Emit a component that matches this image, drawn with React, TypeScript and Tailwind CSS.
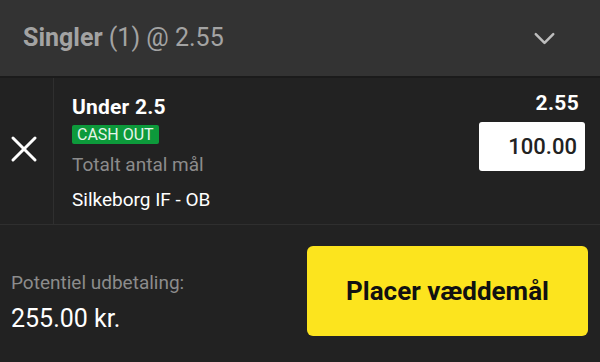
import { ChevronDown, X } from 'lucide-react';

export default function App() {
  return (
    <div className="w-[600px] h-[362px] bg-[#222222] font-['Roboto','Liberation_Sans',sans-serif] overflow-hidden">
      {/* header */}
      <div className="h-[78px] bg-[#333333] flex items-center justify-between pl-[23px] pr-[38px] border-b-2 border-[#1b1b1b]">
        <div className="text-[25px] text-[#a3a3a3]">
          <span className="font-bold">Singler</span> (1) @ 2.55
        </div>
        <ChevronDown className="w-[35px] h-[35px] text-[#bdbdbd]" strokeWidth={1.7} />
      </div>

      {/* selection */}
      <div className="h-[147px] flex border-b border-[#2f2f2f]">
        <div className="w-[54px] shrink-0 flex items-center justify-center border-r border-[#2f2f2f] pr-[6px] pb-[4px]">
          <X className="w-[44px] h-[44px] text-white" strokeWidth={1.65} />
        </div>
        <div className="flex-1 flex justify-between pl-[18px] pr-[15px]">
          <div className="flex flex-col items-start pt-[17px]">
            <div className="text-[21px] leading-[24px] font-bold text-white tracking-[0.2px]">Under 2.5</div>
            <div className="mt-[6px] bg-[#0d9a3b] text-[#e6f5ea] text-[16px] leading-[19px] px-[5px] rounded-[2px]">
              CASH OUT
            </div>
            <div className="mt-[10px] text-[19px] leading-[22px] text-[#8c8c8c]">Totalt antal mål</div>
            <div className="mt-[13px] text-[19px] leading-[22px] text-white">Silkeborg IF - OB</div>
          </div>
          <div className="flex flex-col items-end pt-[13px]">
            <div className="text-[21px] leading-[24px] font-bold text-white mr-[6px] tracking-[0.3px]">2.55</div>
            <div className="mt-[7px] w-[106px] h-[49px] bg-white rounded-[3px] flex items-center justify-end pr-[8px] text-[22px] font-medium text-[#222222]">
              100.00
            </div>
          </div>
        </div>
      </div>

      {/* footer */}
      <div className="flex items-start justify-between pl-[11px] pr-[12px] pt-[21px]">
        <div className="pt-[26px]">
          <div className="text-[19px] leading-[22px] text-[#8c8c8c]">Potentiel udbetaling:</div>
          <div className="mt-[10px] text-[25px] leading-[30px] text-white">255.00 kr.</div>
        </div>
        <button className="w-[281px] h-[90px] bg-[#fce41e] rounded-[6px] text-[26px] font-bold text-[#111111]">
          Placer væddemål
        </button>
      </div>
    </div>
  );
}
